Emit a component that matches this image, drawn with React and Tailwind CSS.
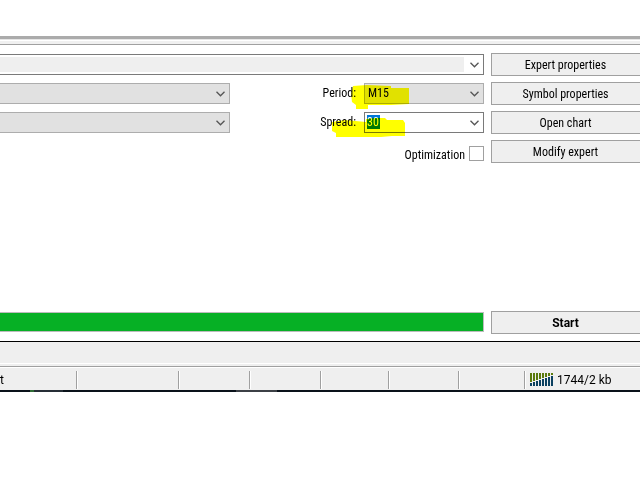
import React from "react";

const Chevron = () => (
  <svg
    viewBox="0 0 9 6"
    className="pointer-events-none absolute right-1 top-[7px] h-[6px] w-[9px]"
    fill="none"
    stroke="#555555"
    strokeWidth="1.3"
  >
    <path d="M0.5 0.8 L4.5 4.8 L8.5 0.8" />
  </svg>
);

const Dropdown = ({ id, label, value = "" }) => (
  <div className="relative h-[21px] w-full border border-[#adadad]">
    <select
      id={id}
      aria-label={label}
      defaultValue={value}
      className="block h-full w-full appearance-none bg-[#e1e1e1] pl-[3px] text-xs leading-[19px] text-black outline-none"
    >
      <option value={value}>{value}</option>
    </select>
    <Chevron />
  </div>
);

const sideButtons = [
  "Expert properties",
  "Symbol properties",
  "Open chart",
  "Modify expert",
];

const SideButton = ({ children, className = "" }) => (
  <button
    className={`block h-[23px] w-full border border-r-0 border-[#a0a0a0] bg-[#efefef] pr-px leading-[22px] ${className}`}
  >
    {children}
  </button>
);

const heights = [3, 4, 5, 6, 7, 8, 9, 10];

const TrafficIcon = () => (
  <svg
    viewBox="0 0 23 13"
    className="mt-[2px] h-[13px] w-[23px]"
    shapeRendering="crispEdges"
  >
    {heights.map((h, i) => (
      <g key={h}>
        <rect x={i * 3} y="0" width="2" height={12 - h} fill="#5b7a0c" />
        <rect x={i * 3} y={13 - h} width="2" height={h} fill="#0b4060" />
      </g>
    ))}
  </svg>
);

const App = () => {
  return (
    <div className="min-h-screen overflow-hidden bg-white pt-9 font-['Roboto_Condensed','Roboto',sans-serif] text-xs text-black">
      <div className="h-[3px] bg-[#ababab]" />
      <div className="h-px bg-[#e5e5e5]" />
      <div className="mt-px h-1 border-b border-[#a0a0a0] bg-[#f0f0f0]" />

      <main className="flex gap-[7px] pt-2">
        <section className="min-w-0 flex-1 pt-px">
          <div className="relative h-[21px] border border-l-0 border-[#7a7a7a] bg-white py-[2px] pr-[19px]">
            <select
              aria-label="Expert"
              className="block h-[15px] w-full appearance-none bg-[#efefef] outline-none"
            />
            <Chevron />
          </div>

          <div className="mt-2 flex justify-between">
            <div className="-ml-px w-[231px] space-y-2">
              <Dropdown label="Symbol" />
              <Dropdown label="Model" />
            </div>

            <div className="relative grid grid-cols-[auto_120px] items-center gap-x-2 gap-y-2">
              <label htmlFor="period" className="text-right leading-[21px]">
                Period:
              </label>
              <Dropdown id="period" value="M15" />
              <label htmlFor="spread" className="text-right leading-[21px]">
                Spread:
              </label>
              <div className="relative h-[21px] border border-[#7a7a7a] bg-white py-[2px] pl-[2px]">
                <input
                  id="spread"
                  defaultValue="30"
                  className="block h-[14px] w-[13px] bg-[#0078d7] text-xs leading-[14px] text-white outline-none"
                />
                <Chevron />
              </div>

              {/* marker strokes over the two fields */}
              <svg
                viewBox="0 0 84 60"
                className="pointer-events-none absolute -top-px right-[69px] h-[60px] w-[84px] mix-blend-multiply"
                fill="#ffff00"
              >
                <path d="M22 4 L36 3 L60 4 V6 H78 V22 L60 23 L37 23 V27 H25 V23 L21 20 L20 12 Z" />
                <path d="M1 40 L14 38 L35 40 V37 L44 36 H54 L56 38 H72 L74 41 V54 H61 L50 55 H5 V51 L1 49 Z" />
              </svg>
            </div>
          </div>

          <label className="mt-[13px] flex items-start justify-end gap-1 leading-[19px]">
            Optimization
            <input
              type="checkbox"
              className="size-[15px] appearance-none border border-[#a0a0a0] bg-white"
            />
          </label>
        </section>

        <aside className="w-[149px] shrink-0 space-y-[6px]">
          {sideButtons.map((text) => (
            <SideButton key={text}>{text}</SideButton>
          ))}
        </aside>
      </main>

      <div className="mt-[146px] flex items-start gap-[7px]">
        <div
          role="progressbar"
          aria-label="Testing progress"
          aria-valuenow={100}
          className="mt-px h-5 min-w-0 flex-1 border border-l-0 border-[#bcbcbc] bg-[#06b025]"
        />
        <div className="w-[149px] shrink-0">
          <SideButton className="font-['Roboto',sans-serif] text-xs font-bold">
            Start
          </SideButton>
        </div>
      </div>

      <div className="mt-[7px] h-[23px] border-b border-t border-b-white border-t-black bg-[#efefef]" />

      <footer className="bg-[#efefef] pt-[2px] font-['Roboto',sans-serif] text-xs">
        <div className="flex border-t border-[#a0a0a0] shadow-[inset_0_1px_0_#ffffff]">
          <div className="mb-px mt-1 flex h-[18px] flex-1">
            <span className="w-[77px] border-r border-[#a0a0a0] leading-[18px]">t</span>
            <span className="w-[102px] border-l border-r border-l-white border-r-[#a0a0a0]" />
            <span className="w-[71px] border-l border-r border-l-white border-r-[#a0a0a0]" />
            <span className="w-[71px] border-l border-r border-l-white border-r-[#a0a0a0]" />
            <span className="w-[68px] border-l border-r border-l-white border-r-[#a0a0a0]" />
            <span className="w-[70px] border-l border-r border-l-white border-r-[#a0a0a0]" />
            <span className="w-[66px] border-l border-r border-l-white border-r-[#a0a0a0]" />
            <span className="flex flex-1 items-start gap-1 border-l border-white pl-1 leading-[18px]">
              <TrafficIcon />
              1744/2 kb
            </span>
          </div>
        </div>
        <div className="flex h-[2px] bg-[#0a121a]">
          <span className="ml-[30px] w-1 bg-[#2f6b35]" />
          <span className="w-[29px] bg-[#262e36]" />
          <span className="ml-[173px] w-[41px] bg-[#3c4046]" />
        </div>
      </footer>
    </div>
  );
};

export default App;
